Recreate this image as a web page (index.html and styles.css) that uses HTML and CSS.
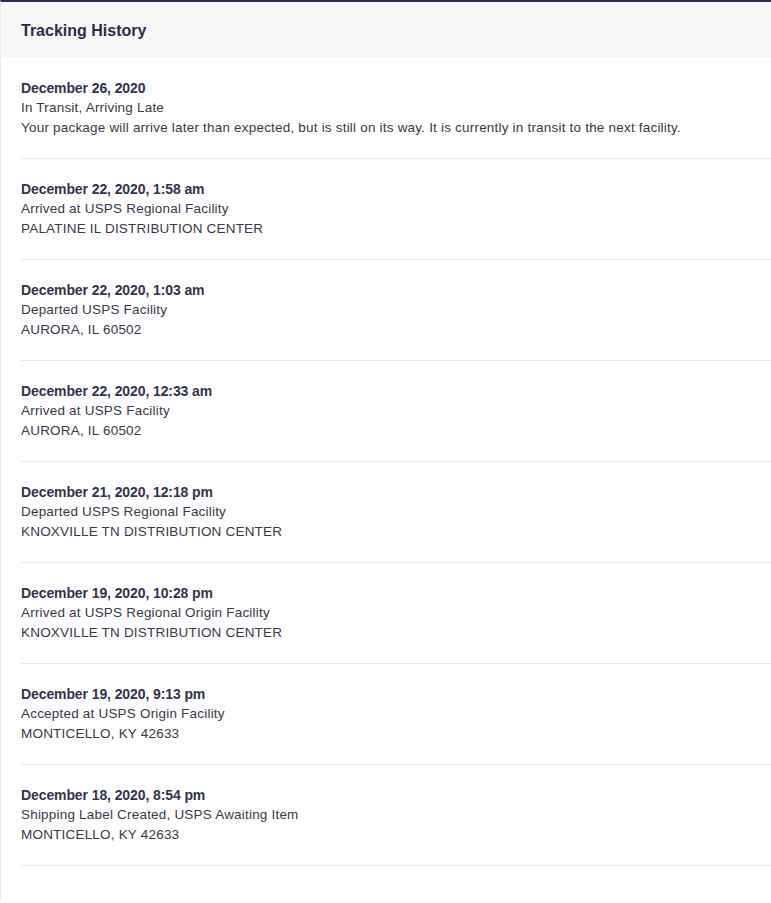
FILE: index.html
```html
<!DOCTYPE html>
<html>
<head>
<meta charset="utf-8">
<link rel="stylesheet" href="styles.css">
</head>
<body>
<section class="card">
  <header class="card-head">Tracking History</header>
  <ul class="events">
    <li class="event">
      <div class="date">December 26, 2020</div>
      <div class="line">In Transit, Arriving Late</div>
      <div class="line">Your package will arrive later than expected, but is still on its way. It is currently in transit to the next facility.</div>
    </li>
    <li class="event">
      <div class="date">December 22, 2020, 1:58 am</div>
      <div class="line">Arrived at USPS Regional Facility</div>
      <div class="line">PALATINE IL DISTRIBUTION CENTER</div>
    </li>
    <li class="event">
      <div class="date">December 22, 2020, 1:03 am</div>
      <div class="line">Departed USPS Facility</div>
      <div class="line">AURORA, IL 60502</div>
    </li>
    <li class="event">
      <div class="date">December 22, 2020, 12:33 am</div>
      <div class="line">Arrived at USPS Facility</div>
      <div class="line">AURORA, IL 60502</div>
    </li>
    <li class="event">
      <div class="date">December 21, 2020, 12:18 pm</div>
      <div class="line">Departed USPS Regional Facility</div>
      <div class="line">KNOXVILLE TN DISTRIBUTION CENTER</div>
    </li>
    <li class="event">
      <div class="date">December 19, 2020, 10:28 pm</div>
      <div class="line">Arrived at USPS Regional Origin Facility</div>
      <div class="line">KNOXVILLE TN DISTRIBUTION CENTER</div>
    </li>
    <li class="event">
      <div class="date">December 19, 2020, 9:13 pm</div>
      <div class="line">Accepted at USPS Origin Facility</div>
      <div class="line">MONTICELLO, KY 42633</div>
    </li>
    <li class="event">
      <div class="date">December 18, 2020, 8:54 pm</div>
      <div class="line">Shipping Label Created, USPS Awaiting Item</div>
      <div class="line">MONTICELLO, KY 42633</div>
    </li>
  </ul>
</section>
</body>
</html>
```
FILE: styles.css
```css
html, body {
  margin: 0;
  padding: 0;
  background: #ffffff;
}
body {
  font-family: "Liberation Sans", Arial, sans-serif;
  width: 771px;
  height: 903px;
  overflow: hidden;
}
.card {
  border-top: 2px solid #2f2d55;
  border-left: 1px solid #ececec;
  min-height: 901px;
  box-sizing: border-box;
}
.card-head {
  background: #f7f7f8;
  height: 55px;
  box-sizing: border-box;
  padding: 19px 0 0 20px;
  font-size: 16px;
  font-weight: bold;
  color: #2d2b4e;
  line-height: 20px;
}
.events {
  list-style: none;
  margin: 0;
  padding: 0 0 0 20px;
}
.event {
  padding: 21px 0 20px 0;
  border-bottom: 1px solid #e8e8ea;
}
.event + .event {
  padding-top: 20px;
}
.date {
  font-size: 14px;
  font-weight: bold;
  color: #33334f;
  line-height: 20px;
  letter-spacing: -0.1px;
}
.line {
  font-size: 13.5px;
  color: #3a3a48;
  line-height: 20px;
  letter-spacing: 0.2px;
}
```
